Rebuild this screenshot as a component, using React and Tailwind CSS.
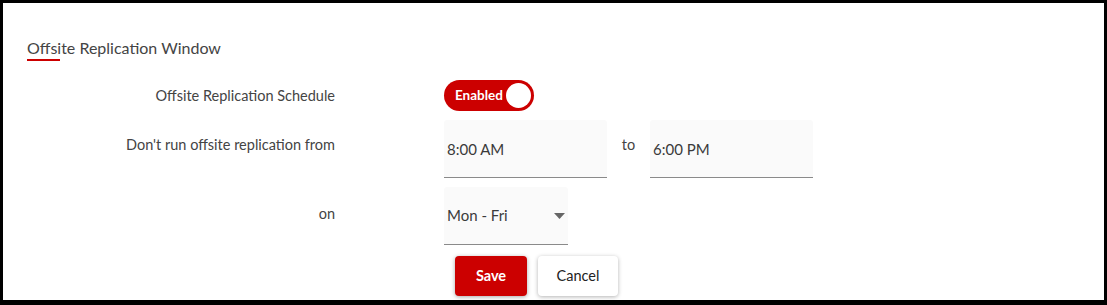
export default function App() {
  return (
    <div
      className="w-[1107px] h-[305px] border-[3px] border-b-[5px] border-black bg-white text-[#444]"
      style={{ fontFamily: 'Lato, "Open Sans", sans-serif' }}
    >
      <div className="pl-[24px] pt-[35px] leading-[20px]">
        <div className="relative inline-block align-top text-[16px] leading-[20px] text-[#444]">
          Offsite Replication Window
          <span className="absolute left-0 top-[21px] h-[2px] w-[33px] bg-[#cc0000]" />
        </div>
      </div>

      {/* schedule toggle */}
      <div className="flex items-center mt-[22px]">
        <div className="w-[332px] text-right text-[14.5px] leading-[20px]">Offsite Replication Schedule</div>
        <div className="ml-[109px]">
          <button className="flex items-center h-[31px] w-[90px] rounded-full bg-[#cc0000] pl-[11px] pr-[3px] justify-between">
            <span className="text-[13.5px] font-bold text-white">Enabled</span>
            <span className="h-[25px] w-[25px] rounded-full bg-white" />
          </button>
        </div>
      </div>

      {/* time window */}
      <div className="flex items-start mt-[9px]">
        <div className="w-[332px] text-right text-[14.5px] leading-[20px] pt-[15px]">
          Don't run offsite replication from
        </div>
        <div className="ml-[109px] flex items-start">
          <div className="w-[163px] h-[58px] bg-[#fafafa] border-b border-[#8a8a8a] rounded-t-[3px] flex items-center pl-[3px] pt-[2px] text-[15px] text-[#3a3a3a]">
            8:00 AM
          </div>
          <div className="w-[43px] pt-[15px] text-center text-[14.5px] leading-[20px]">to</div>
          <div className="w-[163px] h-[58px] bg-[#fafafa] border-b border-[#8a8a8a] rounded-t-[3px] flex items-center pl-[3px] pt-[2px] text-[15px] text-[#3a3a3a]">
            6:00 PM
          </div>
        </div>
      </div>

      {/* days */}
      <div className="flex items-start mt-[9px]">
        <div className="w-[332px] text-right text-[14.5px] leading-[20px] pt-[17px]">on</div>
        <div className="ml-[109px]">
          <div className="w-[124px] h-[58px] bg-[#fafafa] border-b border-[#8a8a8a] rounded-t-[3px] flex items-center justify-between pl-[3px] pr-[3px] text-[15px] text-[#3a3a3a]">
            <span>Mon - Fri</span>
            <svg width="11" height="6" viewBox="0 0 11 6">
              <path d="M0 0 L11 0 L5.5 6 Z" fill="#666" />
            </svg>
          </div>
        </div>
      </div>

      {/* actions */}
      <div className="flex mt-[11px] pl-[452px] gap-[11px]">
        <button className="h-[40px] w-[72px] rounded-[4px] bg-[#cc0000] text-white text-[14.5px] font-bold shadow-[0_1px_4px_rgba(0,0,0,0.35)]">
          Save
        </button>
        <button className="h-[40px] w-[80px] rounded-[4px] bg-white text-[#222] text-[14.5px] shadow-[0_1px_4px_rgba(0,0,0,0.3)]">
          Cancel
        </button>
      </div>
    </div>
  );
}
